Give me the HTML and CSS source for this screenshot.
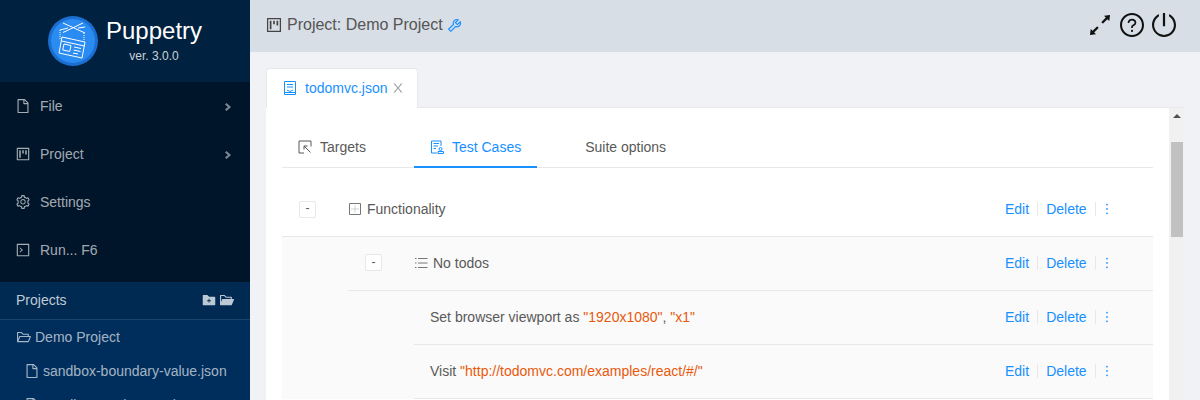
FILE: index.html
```html
<!DOCTYPE html>
<html lang="en">
<head>
<meta charset="utf-8">
<title>Puppetry</title>
<link rel="stylesheet" href="styles.css">
</head>
<body>
<svg class="sprite" aria-hidden="true">
  <symbol id="i-file" viewBox="0 0 1024 1024"><path d="M854.6 288.6L639.4 73.4c-6-6-14.1-9.4-22.6-9.4H192c-17.7 0-32 14.3-32 32v832c0 17.7 14.3 32 32 32h640c17.7 0 32-14.3 32-32V311.3c0-8.5-3.4-16.7-9.4-22.7zM790.2 326H602V137.8L790.2 326zm1.8 562H232V136h302v216a42 42 0 0 0 42 42h216v494z"/></symbol>
  <symbol id="i-project" viewBox="0 0 1024 1024"><path d="M280 752h80c4.4 0 8-3.6 8-8V280c0-4.4-3.6-8-8-8h-80c-4.4 0-8 3.6-8 8v464c0 4.4 3.6 8 8 8zm192-280h80c4.4 0 8-3.6 8-8V280c0-4.4-3.6-8-8-8h-80c-4.4 0-8 3.6-8 8v184c0 4.4 3.6 8 8 8zm192 72h80c4.4 0 8-3.6 8-8V280c0-4.4-3.6-8-8-8h-80c-4.4 0-8 3.6-8 8v256c0 4.4 3.6 8 8 8zm216-432H144c-17.7 0-32 14.3-32 32v736c0 17.7 14.3 32 32 32h736c17.7 0 32-14.3 32-32V144c0-17.7-14.3-32-32-32zm-40 728H184V184h656v656z"/></symbol>
  <symbol id="i-setting" viewBox="0 0 1024 1024"><path d="M924.8 625.7l-65.5-56c3.1-19 4.7-38.4 4.7-57.8s-1.6-38.8-4.7-57.8l65.5-56a32.03 32.03 0 0 0 9.3-35.2l-.9-2.6a443.74 443.74 0 0 0-79.7-137.9l-1.8-2.1a32.12 32.12 0 0 0-35.1-9.5l-81.3 28.9c-30-24.6-63.5-44-99.7-57.6l-15.7-85a32.05 32.05 0 0 0-25.8-25.7l-2.7-.5c-52.1-9.4-106.9-9.4-159 0l-2.7.5a32.05 32.05 0 0 0-25.8 25.7l-15.8 85.4a351.86 351.86 0 0 0-99 57.4l-81.9-29.1a32 32 0 0 0-35.1 9.5l-1.8 2.1a446.02 446.02 0 0 0-79.7 137.9l-.9 2.6c-4.5 12.5-.8 26.5 9.3 35.2l66.3 56.6c-3.1 18.8-4.6 38-4.6 57.1 0 19.2 1.5 38.4 4.6 57.1L99 625.5a32.03 32.03 0 0 0-9.3 35.2l.9 2.6c18.1 50.4 44.9 96.9 79.7 137.9l1.8 2.1a32.12 32.12 0 0 0 35.1 9.5l81.9-29.1c29.8 24.5 63.1 43.9 99 57.4l15.8 85.4a32.05 32.05 0 0 0 25.8 25.7l2.7.5a449.4 449.4 0 0 0 159 0l2.7-.5a32.05 32.05 0 0 0 25.8-25.7l15.7-85a350 350 0 0 0 99.7-57.6l81.3 28.9a32 32 0 0 0 35.1-9.5l1.8-2.1c34.8-41.1 61.6-87.5 79.7-137.9l.9-2.6c4.5-12.3.8-26.3-9.3-35zM788.3 465.9c2.5 15.1 3.8 30.6 3.8 46.1s-1.3 31-3.8 46.1l-6.6 40.1 74.7 63.9a370.03 370.03 0 0 1-42.6 73.6L721 702.8l-31.4 25.8c-23.9 19.6-50.5 35-79.3 45.8l-38.1 14.3-17.9 97a377.5 377.5 0 0 1-85 0l-17.9-97.2-37.8-14.5c-28.5-10.8-55-26.2-78.7-45.7l-31.4-25.9-93.4 33.2c-17-22.9-31.2-47.6-42.6-73.6l75.5-64.5-6.5-40c-2.4-14.9-3.7-30.3-3.7-45.5 0-15.3 1.2-30.6 3.7-45.5l6.5-40-75.5-64.5c11.3-26.1 25.6-50.7 42.6-73.6l93.4 33.2 31.4-25.9c23.7-19.5 50.2-34.9 78.7-45.7l37.9-14.3 17.9-97.2c28.1-3.2 56.8-3.2 85 0l17.9 97 38.1 14.3c28.7 10.8 55.4 26.2 79.3 45.8l31.4 25.8 92.8-32.9c17 22.9 31.2 47.6 42.6 73.6L781.8 426l6.5 39.9zM512 326c-97.2 0-176 78.8-176 176s78.8 176 176 176 176-78.8 176-176-78.8-176-176-176zm79.2 255.2A111.6 111.6 0 0 1 512 614c-29.9 0-58-11.7-79.2-32.8A111.6 111.6 0 0 1 400 502c0-29.9 11.7-58 32.8-79.2C454 401.6 482.1 390 512 390c29.9 0 58 11.6 79.2 32.8A111.6 111.6 0 0 1 624 502c0 29.9-11.7 58-32.8 79.2z"/></symbol>
  <symbol id="i-code" viewBox="0 0 1024 1024"><path d="M321.100 679.100l192-161c3.800-3.200 3.800-9.100 0-12.300l-192-160.900A7.950 7.950 0 0 0 308 351v62.700c0 2.400 1 4.600 2.900 6.100L420.700 512l-109.800 92.200a8.100 8.100 0 0 0-2.900 6.100V673c0 6.800 7.900 10.500 13.100 6.100zM880 112H144c-17.700 0-32 14.300-32 32v736c0 17.700 14.300 32 32 32h736c17.700 0 32-14.300 32-32V144c0-17.700-14.300-32-32-32zm-40 728H184V184h656v656z"/></symbol>
  <symbol id="i-right" viewBox="0 0 6 8"><path d="M0 1.400L1.500 0 6 4 1.500 8 0 6.600 3 4z"/></symbol>
  <symbol id="i-folder-add" viewBox="0 0 1024 1024"><path d="M880 298.400H521L403.700 186.200a8.150 8.150 0 0 0-5.500-2.200H144c-17.700 0-32 14.300-32 32v592c0 17.700 14.300 32 32 32h736c17.700 0 32-14.300 32-32V330.400c0-17.700-14.300-32-32-32zM632 577c0 3.800-3.400 7-7.500 7H540v84.900c0 3.900-3.200 7.100-7 7.100h-42c-3.900 0-7-3.200-7-7.100V584h-84.500c-4.100 0-7.500-3.200-7.500-7v-42c0-3.800 3.400-7 7.500-7H484v-84.900c0-3.900 3.200-7.100 7-7.100h42c3.900 0 7 3.200 7 7.100V528h84.500c4.100 0 7.500 3.200 7.500 7v42z"/></symbol>
  <symbol id="i-open-fill" viewBox="0 0 1024 1024"><path d="M928 444H820V330.400c0-17.700-14.300-32-32-32H473L355.700 186.200a8.150 8.150 0 0 0-5.500-2.200H96c-17.700 0-32 14.300-32 32v592c0 17.700 14.300 32 32 32h698c13 0 24.800-7.900 29.700-20l134-332c1.500-3.800 2.300-7.900 2.300-12 0-17.700-14.300-32-32-32zm-180 0H238c-13 0-24.800 7.900-29.700 20L136 643.200V256h188.500l119.600 114.400H748V444z"/></symbol>
  <symbol id="i-open" viewBox="0 0 1024 1024"><path d="M928 444H820V330.400c0-17.700-14.300-32-32-32H473L355.700 186.200a8.150 8.150 0 0 0-5.500-2.200H96c-17.700 0-32 14.300-32 32v592c0 17.700 14.300 32 32 32h698c13 0 24.800-7.900 29.700-20l134-332c1.500-3.800 2.300-7.900 2.300-12 0-17.700-14.300-32-32-32zM136 256h188.500l119.600 114.400H748V444H238c-13 0-24.800 7.900-29.700 20L136 643.200V256zm635.300 512H159l103.300-256h612.400L771.300 768z"/></symbol>
  <symbol id="i-more" viewBox="0 0 1024 1024"><path d="M456 231a56 56 0 1 0 112 0 56 56 0 1 0-112 0zm0 280a56 56 0 1 0 112 0 56 56 0 1 0-112 0zm0 280a56 56 0 1 0 112 0 56 56 0 1 0-112 0z"/></symbol>
</svg>

<aside class="sidebar">
  <div class="brand">
    <svg class="logo" viewBox="0 0 50 50">
      <circle class="logo-ring" cx="25" cy="25" r="25"/>
      <circle class="logo-disc" cx="25" cy="25" r="22"/>
      <g class="logo-art">
        <path d="M15 7l22 10M35 7L15 16.500M12 14l8-2M30 12l7-1"/>
        <path d="M12 14v10M36 17v8" stroke-dasharray="1 1"/>
        <path d="M14 21l23 5-3 16-23-5z"/>
        <path d="M13.500 25l23 5"/>
        <path d="M16 28l7 1.500-1.300 6-7-1.500z"/>
        <path d="M26 31l7 1.500M25.500 34l7 1.500M25 37l5 1"/>
      </g>
    </svg>
    <div class="brand-text">
      <div class="brand-name">Puppetry</div>
      <div class="brand-ver">ver. 3.0.0</div>
    </div>
  </div>
  <nav class="menu">
    <div class="menu-item"><svg class="ico"><use href="#i-file"/></svg><span class="menu-label">File</span><svg class="chev"><use href="#i-right"/></svg></div>
    <div class="menu-item"><svg class="ico"><use href="#i-project"/></svg><span class="menu-label">Project</span><svg class="chev"><use href="#i-right"/></svg></div>
    <div class="menu-item"><svg class="ico"><use href="#i-setting"/></svg><span class="menu-label">Settings</span></div>
    <div class="menu-item"><svg class="ico"><use href="#i-code"/></svg><span class="menu-label">Run... F6</span></div>
  </nav>
  <div class="projects-head">
    <span class="projects-title">Projects</span>
    <svg class="head-ico"><use href="#i-folder-add"/></svg>
    <svg class="head-ico"><use href="#i-open-fill"/></svg>
  </div>
  <div class="projects">
    <div class="project-root"><svg class="ico"><use href="#i-open"/></svg>Demo Project</div>
    <div class="project-file"><svg class="ico"><use href="#i-file"/></svg>sandbox-boundary-value.json</div>
    <div class="project-file"><svg class="ico"><use href="#i-file"/></svg>sandbox-exploratory.json</div>
  </div>
</aside>

<main class="main">
  <header class="topbar">
    <svg class="top-project"><use href="#i-project"/></svg>
    <span class="top-title">Project: Demo Project</span>
    <svg class="top-tool" viewBox="0 0 1024 1024"><path d="M876.600 239.500c-.5-.9-1.200-1.800-2-2.500-5-5-13.100-5-18.100 0L684.200 409.300l-67.900-67.900L788.700 169c.8-.8 1.400-1.600 2-2.500 3.600-6.100 1.600-13.900-4.500-17.500-98.200-58-226.800-44.700-311.300 39.700-67 67-89.200 162-66.500 247.400l-293 293c-3 3-2.800 7.900.3 11l169.700 169.700c3.100 3.100 8.100 3.300 11 .3l292.900-292.900c85.500 22.800 180.500.7 247.600-66.400 84.400-84.500 97.700-213.100 39.700-311.300zM786 499.800c-58.100 58.100-145.300 69.300-214.600 33.600l-8.800 8.800-.1-.1-274 274.100-79.200-79.200 230.100-230.100s0 .1.100.1l52.800-52.800c-35.700-69.300-24.500-156.500 33.600-214.600a184.200 184.200 0 0 1 144-53.500L537 318.900a32.050 32.050 0 0 0 0 45.300l124.500 124.500a32.050 32.050 0 0 0 45.300 0l132.800-132.800c3.700 51.800-14.400 104.800-53.600 143.900z"/></svg>
    <div class="top-actions">
      <svg class="top-expand" viewBox="160 160 704 704"><path d="M855 160.100l-189.200 23.500c-6.600.8-9.300 8.800-4.700 13.500l54.700 54.700-153.500 153.500a8.030 8.030 0 0 0 0 11.300l45.100 45.100c3.100 3.100 8.200 3.100 11.300 0l153.600-153.600 54.700 54.700a7.940 7.940 0 0 0 13.500-4.700L863.900 169a7.900 7.900 0 0 0-8.900-8.900zM416.600 562.300a8.030 8.030 0 0 0-11.300 0L251.800 715.900l-54.700-54.700a7.940 7.940 0 0 0-13.500 4.700L160.100 855c-.6 5.200 3.700 9.500 8.900 8.900l189.200-23.500c6.600-.8 9.300-8.800 4.700-13.500l-54.700-54.700 153.600-153.600c3.100-3.100 3.100-8.200 0-11.300l-45.200-45z"/></svg>
      <svg class="top-circle" viewBox="64 64 896 896"><path d="M512 64C264.600 64 64 264.600 64 512s200.600 448 448 448 448-200.600 448-448S759.400 64 512 64zm0 820c-205.400 0-372-166.600-372-372s166.600-372 372-372 372 166.600 372 372-166.600 372-372 372z"/><path d="M623.600 316.700C593.600 290.400 554 276 512 276s-81.600 14.500-111.600 40.700C369.200 344 352 380.700 352 420v7.600c0 4.400 3.600 8 8 8h48c4.400 0 8-3.600 8-8V420c0-44.100 43.100-80 96-80s96 35.900 96 80c0 31.100-22 59.600-56.100 72.700-21.200 8.100-39.200 22.300-52.100 40.900-13.100 19-19.900 41.800-19.900 64.900V620c0 4.400 3.600 8 8 8h48c4.400 0 8-3.600 8-8v-22.700a48.300 48.300 0 0 1 30.900-44.800c59-22.700 97.100-74.700 97.100-132.500.1-39.300-17.100-76-48.300-103.300zM472 732a40 40 0 1 0 80 0 40 40 0 1 0-80 0z"/></svg>
      <svg class="top-circle" viewBox="80 80 864 864"><path d="M705.600 124.900a8 8 0 0 0-11.600 7.200v64.200c0 5.500 2.900 10.600 7.500 13.600a352.200 352.200 0 0 1 62.200 49.800c32.700 32.800 58.400 70.900 76.300 113.300a355 355 0 0 1 27.900 138.700c0 48.100-9.400 94.800-27.900 138.700a355.920 355.920 0 0 1-76.300 113.300 353.060 353.060 0 0 1-113.200 76.400c-43.800 18.600-90.500 28-138.500 28s-94.700-9.400-138.500-28a353.060 353.060 0 0 1-113.200-76.400A355.920 355.920 0 0 1 184 650.400a355 355 0 0 1-27.900-138.700c0-48.100 9.400-94.800 27.900-138.700 17.900-42.400 43.600-80.500 76.300-113.300 19-19 39.800-35.600 62.200-49.800 4.700-2.900 7.500-8.100 7.500-13.600V132c0-6-6.300-9.800-11.600-7.200C178.500 195.200 82 339.300 80 506.300 77.200 745.100 272.500 943.500 511.200 944c239 .5 432.800-193.300 432.800-432.400 0-169.200-97-315.700-238.400-386.700zM480 560h64c4.400 0 8-3.600 8-8V88c0-4.400-3.600-8-8-8h-64c-4.400 0-8 3.600-8 8v464c0 4.400 3.600 8 8 8z"/></svg>
    </div>
  </header>

  <div class="workspace">
    <div class="doc-tabs">
      <div class="doc-tab">
        <svg class="doc-ico line" viewBox="0 0 14 14"><path d="M1.500.5h11v13h-11zM4 3.500h6M4 6h6M4 9l3 1.500L10 9M1.500 11.500h11"/></svg>
        <span>todomvc.json</span>
        <svg class="doc-close" viewBox="0 0 1024 1024"><path d="M563.800 512l262.500-312.900c4.400-5.200.7-13.100-6.100-13.100h-79.800c-4.700 0-9.200 2.100-12.300 5.700L511.600 449.800 295.100 191.700c-3-3.600-7.500-5.700-12.300-5.700H203c-6.800 0-10.500 7.900-6.100 13.100L459.400 512 196.900 824.900A7.950 7.950 0 0 0 203 838h79.800c4.700 0 9.200-2.100 12.300-5.700l216.500-258.100 216.500 258.100c3 3.600 7.500 5.700 12.300 5.700h79.800c6.800 0 10.500-7.900 6.100-13.100L563.800 512z"/></svg>
      </div>
    </div>
    <div class="doc-frame">
      <section class="panel">
        <div class="inner-tabs">
          <div class="inner-tab">
            <svg class="tab-ico line" viewBox="0 0 14 14"><path d="M6 13H1V1h12v5.500"/><path d="M6 6l6.500 6.500M6 6v3.500M6 6h3.500"/></svg>
            Targets
          </div>
          <div class="inner-tab is-active">
            <svg class="tab-ico line" viewBox="0 0 14 14"><path d="M11 6V1H1.500v12H7M3.500 3.500H9M3.500 6H8M3.500 8.500H6"/><circle cx="10.500" cy="9" r="1.500"/><path d="M8 13.500h5.500V11.500H8z"/></svg>
            Test Cases
          </div>
          <div class="inner-tab">Suite options</div>
        </div>

        <div class="row row-suite">
          <div class="toggle-cell"><span class="toggle">-</span></div>
          <svg class="row-ico line" viewBox="0 0 14 14"><path d="M1.500 1.500h11v11h-11z"/><path class="dots" d="M7 3.500v7M3.500 7h7"/></svg>
          <span class="row-text">Functionality</span>
          <div class="actions"><a>Edit</a><i></i><a>Delete</a><i></i><svg class="more"><use href="#i-more"/></svg></div>
        </div>
        <div class="nest">
          <div class="row row-test">
            <div class="toggle-cell"><span class="toggle">-</span></div>
            <svg class="row-ico line" viewBox="0 0 14 14"><path d="M4 2.500h9.500M4 7h9.500M4 11.500h9.500"/><path d="M1 2.500h1.500M1 7h1.500M1 11.500h1.500"/></svg>
            <span class="row-text">No todos</span>
            <div class="actions"><a>Edit</a><i></i><a>Delete</a><i></i><svg class="more"><use href="#i-more"/></svg></div>
          </div>
          <div class="row row-command">
            <span class="row-text">Set browser viewport as <b>"1920x1080"</b>, <b>"x1"</b></span>
            <div class="actions"><a>Edit</a><i></i><a>Delete</a><i></i><svg class="more"><use href="#i-more"/></svg></div>
          </div>
          <div class="row row-command">
            <span class="row-text">Visit <b>"http://todomvc.com/examples/react/#/"</b></span>
            <div class="actions"><a>Edit</a><i></i><a>Delete</a><i></i><svg class="more"><use href="#i-more"/></svg></div>
          </div>
        </div>
      </section>
      <div class="scrollbar">
        <div class="scroll-up"></div>
        <div class="scroll-thumb"></div>
      </div>
    </div>
  </div>
</main>
</body>
</html>
```

FILE: styles.css
```css
* { box-sizing: border-box; }
html, body { margin: 0; height: 400px; overflow: hidden; }
body {
  display: flex;
  width: 1200px;
  font: 14px/22px "Liberation Sans", Arial, sans-serif;
  color: #595959;
  background: #f0f2f5;
}
.sprite { display: none; }
svg { fill: currentColor; flex: none; }
svg.line { fill: none; stroke: currentColor; stroke-width: 1; }
.dots { stroke-dasharray: 1 1; stroke-opacity: .6; }

/* sidebar */
.sidebar { width: 250px; flex: none; height: 400px; overflow: hidden; background: #002e5c; display: flex; flex-direction: column; }
.brand { height: 82px; flex: none; background: #002140; display: flex; align-items: center; padding: 0 0 0 48px; gap: 8px; }
.logo { width: 50px; height: 50px; }
.logo-ring { fill: #1a6fd0; }
.logo-disc { fill: #2a8bf2; }
.logo-art { fill: none; stroke: #fff; stroke-width: 1; }
.brand-text { text-align: center; color: #fff; }
.brand-name { font-size: 24px; line-height: 32px; margin-top: -2px; }
.brand-ver { font-size: 12px; line-height: 18px; color: rgba(255,255,255,.8); }
.menu { height: 200px; flex: none; background: #001529; padding-bottom: 8px; }
.menu-item { height: 48px; display: flex; align-items: center; padding: 0 19px 0 15px; color: rgba(255,255,255,.65); }
.ico { width: 16px; height: 16px; }
.menu-label { margin-left: 9px; flex: 1; }
.chev { width: 6px; height: 8px; margin-top: 2px; opacity: .75; }
.projects-head { height: 38px; flex: none; background: #002a52; border-bottom: 1px solid #1b4469; display: flex; align-items: center; padding: 0 15px 2px 16px; color: #c0cad5; }
.projects-title { flex: 1; }
.head-ico { width: 16px; height: 16px; margin-left: 2px; color: #bcc8d4; }
.projects { color: rgba(255,255,255,.65); }
.project-root { height: 34px; display: flex; align-items: center; gap: 3px; padding-left: 16px; }
.project-file { height: 34px; display: flex; align-items: center; gap: 3px; padding-left: 24px; white-space: nowrap; }

/* header */
.main { flex: 1; min-width: 0; height: 400px; display: flex; flex-direction: column; }
.topbar { height: 52px; flex: none; background: #d8dee6; display: flex; align-items: center; padding: 0 24px 2px 15px; }
.top-project { width: 18px; height: 18px; color: #444; }
.top-title { font-size: 16px; margin-left: 4px; color: #555; }
.top-tool { width: 17px; height: 17px; margin-left: 3px; color: #1890ff; }
.top-actions { margin-left: auto; display: flex; align-items: center; gap: 8px; color: #111; }
.top-expand { width: 20px; height: 20px; margin-right: 2px; }
.top-circle { width: 24px; height: 24px; }

/* tabs */
.workspace { flex: 1; min-height: 0; padding: 16px 16px 0; display: flex; flex-direction: column; }
.doc-tabs { height: 40px; flex: none; display: flex; border-bottom: 1px solid #e8e8e8; }
.doc-tab { width: 152px; height: 40px; background: #fff; border: 1px solid #e8e8e8; border-bottom: 0; border-radius: 4px 4px 0 0; display: flex; align-items: center; padding: 0 0 1px 16px; color: #1890ff; }
.doc-ico { width: 14px; height: 14px; margin-right: 8px; }
.doc-close { width: 14px; height: 14px; margin-left: 4px; color: #a0a0a0; }
.doc-frame { flex: 1; min-height: 0; display: flex; }
.panel { width: 903px; flex: none; background: #fff; padding: 0 16px; overflow: hidden; }
.inner-tabs { height: 60px; padding-top: 20px; display: flex; border-bottom: 1px solid #e8e8e8; position: relative; }
.inner-tabs::after { content: ""; position: absolute; left: 846px; bottom: -1px; width: 2px; height: 1px; background: #cfe8ff; }
.inner-tab { height: 40px; display: flex; align-items: center; padding: 0 16px 3px; margin-right: 32px; }
.inner-tab.is-active { color: #1890ff; border-bottom: 2px solid #1890ff; padding-bottom: 1px; }
.tab-ico { width: 14px; height: 14px; margin-right: 8px; }

/* rows */
.row { display: flex; align-items: center; border-bottom: 1px solid #e8e8e8; }
.row-suite { height: 69px; padding-top: 14px; }
.row-test { height: 54px; margin-left: 66px; padding-bottom: 2px; }
.row-command { height: 54px; margin-left: 132px; padding: 0 0 2px 16px; }
.nest { background: #fafafa; }
.toggle-cell { width: 66px; flex: none; padding-left: 17px; }
.toggle { display: flex; align-items: center; justify-content: center; width: 17px; height: 17px; background: #fff; border: 1px solid #e8e8e8; border-radius: 2px; font-size: 12px; line-height: 1; padding-bottom: 2px; }
.row-ico { width: 14px; height: 14px; margin-right: 4px; color: #777; }
.row-text { flex: 1; white-space: nowrap; padding-left: 1px; }
.row-command .row-text { padding-left: 0; }
.row-text b { font-weight: 400; color: #e8590c; }
.actions { display: flex; align-items: center; color: #1890ff; width: 148px; flex: none; }
.actions i { width: 1px; height: 14px; background: #e8e8e8; margin: 0 8px; }
.more { width: 16px; height: 16px; margin-left: -5px; }

/* scrollbar */
.scrollbar { width: 15px; flex: none; background: #f1f1f1; padding: 0 1px 0 2px; display: flex; flex-direction: column; }
.scroll-up { height: 34px; flex: none; position: relative; }
.scroll-up::before { content: ""; position: absolute; left: 2px; top: 6px; border: 4px solid transparent; border-top: 0; border-bottom: 4px solid #505050; }
.scroll-thumb { height: 95px; background: #c1c1c1; }
```
